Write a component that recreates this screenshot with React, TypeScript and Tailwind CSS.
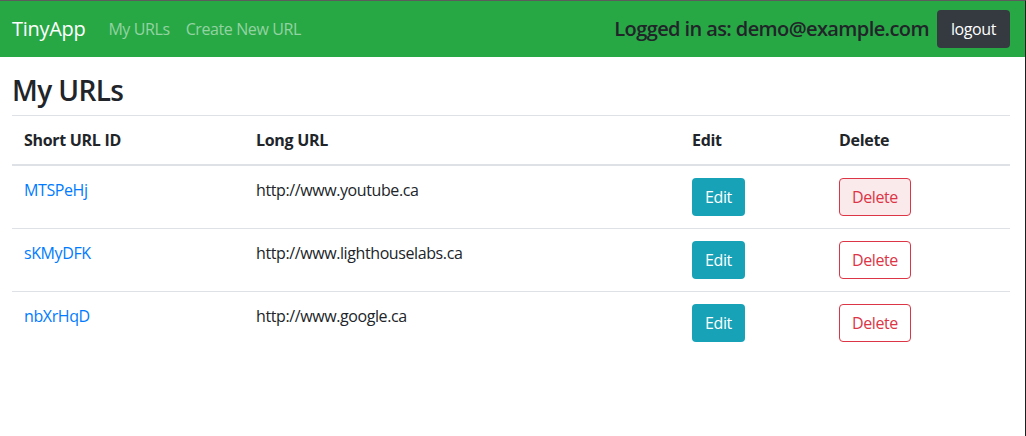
type UrlRow = {
  id: string;
  longUrl: string;
};

const urls: UrlRow[] = [
  { id: "MTSPeHj", longUrl: "http://www.youtube.ca" },
  { id: "sKMyDFK", longUrl: "http://www.lighthouselabs.ca" },
  { id: "nbXrHqD", longUrl: "http://www.google.ca" },
];

function Navbar() {
  return (
    <nav className="flex h-[56px] items-center bg-[#28a745] pl-[12px] pr-[15px]">
      <a className="mr-[23px] text-[20px] leading-[30px] tracking-[-0.3px] text-white">TinyApp</a>
      <a className="mr-[16px] text-[16px] leading-[24px] text-[#93d3a2]">My URLs</a>
      <a className="text-[16px] leading-[24px] text-[#93d3a2]">Create New URL</a>
      <div className="ml-auto flex items-center gap-[8px]">
        <span className="text-[20px] font-semibold leading-[24px] tracking-[-0.6px] text-[#212529]">
          Logged in as: demo@example.com
        </span>
        <button className="h-[38px] rounded-[4px] bg-[#343a40] px-[14px] text-[16px] leading-[24px] text-white">
          logout
        </button>
      </div>
    </nav>
  );
}

export default function App() {
  return (
    <div
      className="h-[436px] w-full overflow-hidden border-t border-r border-t-[#5c5c5c] border-r-[#1e1e1e] bg-white tracking-[-0.4px] text-[#212529]"
      style={{ fontFamily: '"Open Sans", "Noto Sans", sans-serif' }}
    >
      <Navbar />
      <main className="pl-[12px] pr-[15px] pt-[16px]">
        <h3 className="mb-[8px] text-[28px] font-semibold leading-[34px] tracking-[-0.6px]">My URLs</h3>
        <table className="w-full table-fixed border-collapse text-[16px] leading-[24px]">
          <thead>
            <tr className="border-t border-[#dee2e6]">
              <th className="w-[232px] border-b-2 border-[#dee2e6] p-[12px] text-left font-bold tracking-[-0.3px]">Short URL ID</th>
              <th className="w-[436px] border-b-2 border-[#dee2e6] p-[12px] text-left font-bold tracking-[-0.3px]">Long URL</th>
              <th className="w-[147px] border-b-2 border-[#dee2e6] p-[12px] text-left font-bold tracking-[-0.3px]">Edit</th>
              <th className="border-b-2 border-[#dee2e6] p-[12px] text-left font-bold tracking-[-0.3px]">Delete</th>
            </tr>
          </thead>
          <tbody>
            {urls.map((u, i) => (
              <tr key={u.id} className={i > 0 ? "border-t border-[#dee2e6]" : ""}>
                <td className="p-[12px] align-top">
                  <a className="text-[#007bff]">{u.id}</a>
                </td>
                <td className="p-[12px] align-top">{u.longUrl}</td>
                <td className="p-[12px] align-top">
                  <button className="h-[38px] rounded-[4px] bg-[#17a2b8] px-[13px] text-white">Edit</button>
                </td>
                <td className="p-[12px] align-top">
                  <button
                    className={`h-[38px] rounded-[4px] border border-[#dc3545] px-[12px] text-[#dc3545] ${
                      i === 0 ? "bg-[#fbeaec]" : "bg-white"
                    }`}
                  >
                    Delete
                  </button>
                </td>
              </tr>
            ))}
          </tbody>
        </table>
      </main>
    </div>
  );
}
